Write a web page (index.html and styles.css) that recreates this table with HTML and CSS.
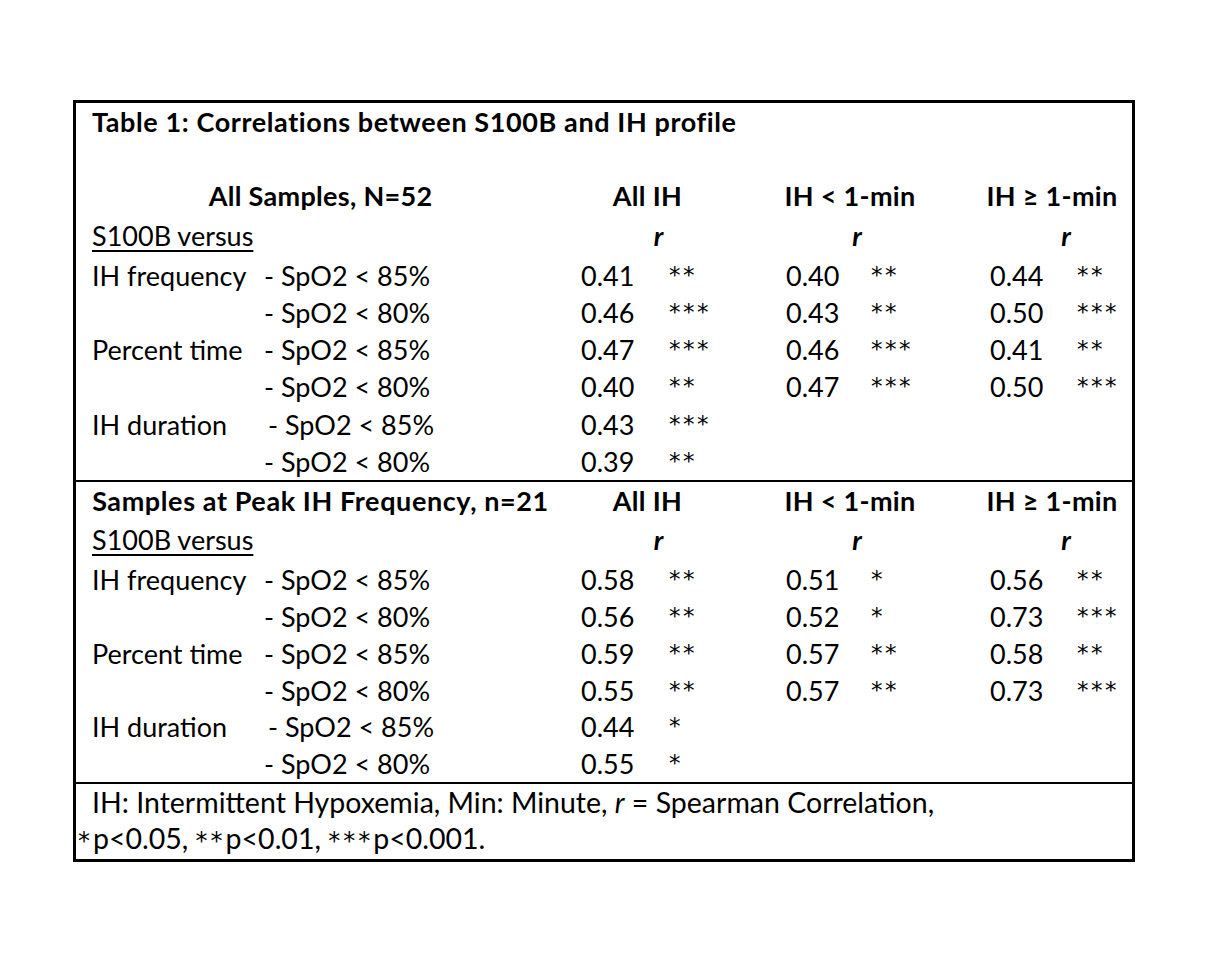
FILE: index.html
```html
<!DOCTYPE html>
<html>
<head>
<meta charset="utf-8">
<link rel="stylesheet" href="styles.css">
</head>
<body>
<div class="table">
  <section class="sec sec-top">
    <div class="row title"><span class="full">Table 1: Correlations between S100B and IH profile</span></div>
    <div class="row blank"></div>
    <div class="row head">
      <span class="grp">All Samples, N=52</span>
      <span class="h1">All IH</span>
      <span class="h2">IH &lt; 1-min</span>
      <span class="h3">IH ≥ 1-min</span>
    </div>
    <div class="row rrow">
      <span class="vs">S100B versus</span>
      <span class="r1">r</span>
      <span class="r2">r</span>
      <span class="r3">r</span>
    </div>
    <div class="row"><span>IH frequency</span><span>- SpO2 &lt; 85%</span><span>0.41</span><span class="st">**</span><span>0.40</span><span class="st">**</span><span>0.44</span><span class="st">**</span></div>
    <div class="row"><span></span><span>- SpO2 &lt; 80%</span><span>0.46</span><span class="st">***</span><span>0.43</span><span class="st">**</span><span>0.50</span><span class="st">***</span></div>
    <div class="row"><span>Percent time</span><span>- SpO2 &lt; 85%</span><span>0.47</span><span class="st">***</span><span>0.46</span><span class="st">***</span><span>0.41</span><span class="st">**</span></div>
    <div class="row"><span></span><span>- SpO2 &lt; 80%</span><span>0.40</span><span class="st">**</span><span>0.47</span><span class="st">***</span><span>0.50</span><span class="st">***</span></div>
    <div class="row"><span>IH duration</span><span class="shift">- SpO2 &lt; 85%</span><span>0.43</span><span class="st">***</span><span></span><span></span><span></span><span></span></div>
    <div class="row"><span></span><span>- SpO2 &lt; 80%</span><span>0.39</span><span class="st">**</span><span></span><span></span><span></span><span></span></div>
  </section>
  <section class="sec sec-mid">
    <div class="row head">
      <span class="grp wide">Samples at Peak IH Frequency, n=21</span>
      <span class="h1">All IH</span>
      <span class="h2">IH &lt; 1-min</span>
      <span class="h3">IH ≥ 1-min</span>
    </div>
    <div class="row rrow">
      <span class="vs">S100B versus</span>
      <span class="r1">r</span>
      <span class="r2">r</span>
      <span class="r3">r</span>
    </div>
    <div class="row"><span>IH frequency</span><span>- SpO2 &lt; 85%</span><span>0.58</span><span class="st">**</span><span>0.51</span><span class="st">*</span><span>0.56</span><span class="st">**</span></div>
    <div class="row"><span></span><span>- SpO2 &lt; 80%</span><span>0.56</span><span class="st">**</span><span>0.52</span><span class="st">*</span><span>0.73</span><span class="st">***</span></div>
    <div class="row"><span>Percent time</span><span>- SpO2 &lt; 85%</span><span>0.59</span><span class="st">**</span><span>0.57</span><span class="st">**</span><span>0.58</span><span class="st">**</span></div>
    <div class="row"><span></span><span>- SpO2 &lt; 80%</span><span>0.55</span><span class="st">**</span><span>0.57</span><span class="st">**</span><span>0.73</span><span class="st">***</span></div>
    <div class="row"><span>IH duration</span><span class="shift">- SpO2 &lt; 85%</span><span>0.44</span><span class="st">*</span><span></span><span></span><span></span><span></span></div>
    <div class="row"><span></span><span>- SpO2 &lt; 80%</span><span>0.55</span><span class="st">*</span><span></span><span></span><span></span><span></span></div>
  </section>
  <section class="sec foot">
    <p class="l1">IH: Intermittent Hypoxemia, Min: Minute, <i>r</i> = Spearman Correlation,</p>
    <p class="l2"><span class="ast">*</span>p&lt;0.05, <span class="ast">**</span>p&lt;0.01, <span class="ast">***</span>p&lt;0.001.</p>
  </section>
</div>
</body>
</html>
```

FILE: styles.css
```css
html, body {
  margin: 0;
  padding: 0;
  background: #fff;
}
body {
  font-family: Lato, "Open Sans", sans-serif;
  font-size: 27px;
  color: #000;
}
.table {
  margin: 100px 0 0 73px;
  width: 1056px;
  border: 3px solid #000;
}
.sec {
  padding-left: 16px;
}
.sec-top {
  padding-top: 0;
  border-bottom: 2px solid #000;
}
.sec-mid {
  border-bottom: 2px solid #000;
}
.row {
  display: grid;
  grid-template-columns: 172px 317px 88px 117px 85px 119px 87px 1fr;
  height: 37.3px;
  line-height: 37.5px;
  white-space: nowrap;
}
.sec-mid .row {
  height: 36.8px;
}
.row.title {
  height: 37.5px;
}
.row.blank {
  height: 36px;
}
.row.head, .row.rrow,
.sec-mid .row.head, .sec-mid .row.rrow {
  height: 40px;
}
.sec-mid .row.head {
  height: 39px;
}
.title .full {
  grid-column: 1 / -1;
  font-weight: 700;
  letter-spacing: 0.6px;
}
.head span {
  font-weight: 700;
  letter-spacing: 0.3px;
  display: flex;
  justify-content: center;
}
.head .grp { grid-column: 1 / 3; padding-right: 32px; }
.head .grp.wide { letter-spacing: 0.6px; }
.head .h1 { grid-column: 3 / 5; padding-right: 72px; }
.head .h2 { grid-column: 5 / 7; padding-right: 76px; }
.head .h3 { grid-column: 7 / 9; padding-right: 18px; }
.rrow .vs {
  grid-column: 1 / 3;
  text-decoration: underline;
  text-decoration-thickness: 2px;
  text-underline-offset: 4px;
}
.rrow .r1, .rrow .r2, .rrow .r3 {
  font-weight: 700;
  font-style: italic;
  display: flex;
  justify-content: center;
}
.rrow .r1 { grid-column: 3 / 5; padding-right: 50px; }
.rrow .r2 { grid-column: 5 / 7; padding-right: 62px; }
.rrow .r3 { grid-column: 7 / 9; padding-left: 10px; }
.st {
  font-family: "DejaVu Sans", sans-serif;
  font-size: 23px;
  letter-spacing: 2.5px;
}
.shift {
  padding-left: 4px;
}
.foot {
  padding-left: 2px;
  padding-bottom: 0;
}
.foot p {
  margin: 0;
  line-height: 36px;
  font-size: 28.5px;
}
.foot .l1 {
  text-indent: 14px;
}
.foot .ast {
  font-family: "DejaVu Sans", sans-serif;
  font-size: 24px;
  letter-spacing: 3px;
}
```
